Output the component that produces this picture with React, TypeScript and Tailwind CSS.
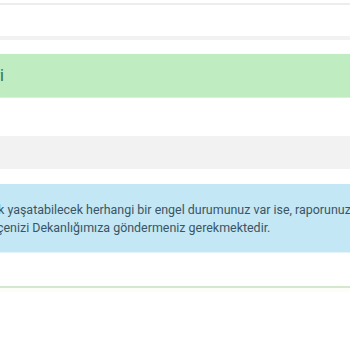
const App = () => {
  return (
    <div className="w-[350px] h-[350px] overflow-hidden bg-white font-['Roboto',sans-serif]">
      <div className="h-[3px]" />
      <div className="h-[2px] bg-[#ededed]" />
      <div className="h-[31px]" />
      <div className="h-[4px] bg-[#f2f2f2]" />
      <div className="h-[14px] border-b border-[#fcfcf4]" />

      <div className="h-[43px] bg-[#bfecc0] flex items-center">
        <div className="w-[4px] flex justify-end whitespace-nowrap text-[16px] text-[#3a6b3b]">
          Duyuru Bilgileri
        </div>
      </div>
      <div className="h-px bg-[#dcefdc]" />

      <div className="h-[38px]" />
      <div className="h-[33px] bg-[#f2f2f2]" />
      <div className="h-[15px]" />

      <div className="h-[68px] bg-[#c4e7f5] pt-[17px] text-[12.45px] leading-[18px] text-[#3a5563] whitespace-nowrap">
        <div className="ml-[-2px]">k yaşatabilecek herhangi bir engel durumunuz var ise, raporunuz ile</div>
        <div className="ml-[-3px]">çenizi Dekanlığımıza göndermeniz gerekmektedir.</div>
      </div>
      <div className="h-px bg-[#e4f3f9]" />

      <div className="h-[33px]" />
      <div className="h-[2px] bg-[#d3e8cf]" />
      <div className="h-[4px] bg-[#fdfdf7]" />
    </div>
  );
};

export default App;
